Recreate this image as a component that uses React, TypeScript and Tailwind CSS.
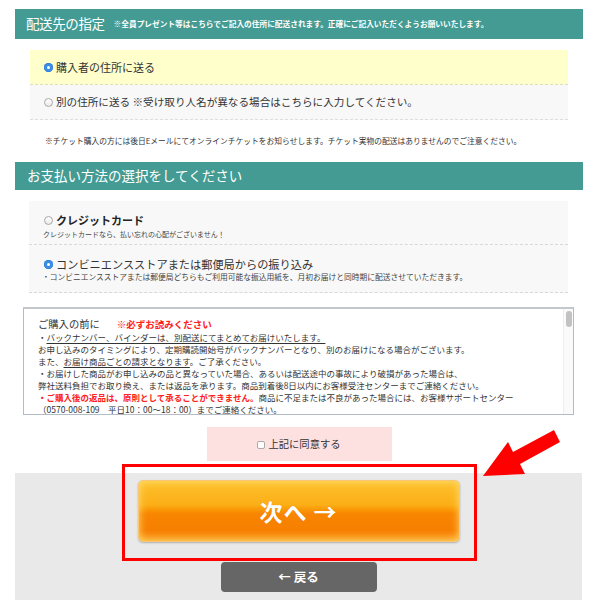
import React from "react";

function Radio({ checked }: { checked?: boolean }) {
  if (checked) {
    return (
      <span className="inline-flex w-[9px] h-[9px] shrink-0 rounded-full bg-[#3b8ee8] items-center justify-center shadow-[inset_0_0_0_0.5px_#2a73c5]">
        <span className="w-[3px] h-[3px] rounded-full bg-white" />
      </span>
    );
  }
  return (
    <span className="inline-block w-[9px] h-[9px] shrink-0 rounded-full bg-[linear-gradient(to_bottom,#ffffff,#eaeaea)] border border-[#a8a8a8]" />
  );
}

export default function App() {
  return (
    <div className="relative w-[596px] h-[600px] overflow-hidden bg-white text-[#333] font-['Noto_Sans_CJK_JP','Noto_Sans',sans-serif]">
      <div className="ml-[15px] w-[568px] pt-[9px]">
        {/* Header 1 */}
        <div className="h-[30px] bg-[#439b93] flex items-center pl-[11px] text-white">
          <span className="text-[13.5px] leading-none tracking-[-0.4px]">配送先の指定</span>
          <span className="ml-[9px] text-[7.7px] font-bold leading-none">
            ※全員プレゼント等はこちらでご記入の住所に配送されます。正確にご記入いただくようお願いいたします。
          </span>
        </div>

        <div className="mt-[11px] ml-[15px] w-[538px]">
          <div className="h-[35px] bg-[#ffffcc] border-b border-dashed border-[#dcdcc8] flex items-center pl-[14px]">
            <Radio checked />
            <span className="ml-[3px] text-[11px] leading-none">購入者の住所に送る</span>
          </div>
          <div className="h-[35px] bg-[#f8f8f8] border-b border-dashed border-[#dddddd] flex items-center pl-[14px]">
            <Radio />
            <span className="ml-[3px] text-[10.6px] leading-none">
              別の住所に送る ※受け取り人名が異なる場合はこちらに入力してください。
            </span>
          </div>
        </div>

        <p className="mt-[16px] pl-[30px] text-[7.75px] leading-[10px] whitespace-nowrap">
          ※チケット購入の方には後日Eメールにてオンラインチケットをお知らせします。チケット実物の配送はありませんのでご注意ください。
        </p>

        {/* Header 2 */}
        <div className="mt-[16px] h-[28px] bg-[#439b93] flex items-center pl-[12px] text-white">
          <span className="text-[13.5px] leading-none">お支払い方法の選択をしてください</span>
        </div>

        <div className="mt-[11px] ml-[14px] w-[539px] bg-[#f8f8f8]">
          <div className="h-[44px] border-b border-dashed border-[#d8d8d8] pl-[15px] pt-[12px]">
            <div className="flex items-center h-[14px]">
              <Radio />
              <span className="ml-[3px] text-[11px] font-bold leading-[14px] text-[#222]">クレジットカード</span>
            </div>
            <div className="mt-[2px] -ml-[1px] text-[7px] leading-[10px] text-[#444]">
              クレジットカードなら、払い忘れの心配がございません！
            </div>
          </div>
          <div className="h-[48px] border-b border-dashed border-[#d8d8d8] pl-[15px] pt-[12px]">
            <div className="flex items-center h-[14px]">
              <Radio checked />
              <span className="ml-[3px] text-[11.2px] leading-[14px]">コンビニエンスストアまたは郵便局からの振り込み</span>
            </div>
            <div className="mt-[1px] -ml-[2px] text-[7.75px] leading-[10px] text-[#444] whitespace-nowrap">
              ・コンビニエンスストアまたは郵便局どちらもご利用可能な振込用紙を、月初お届けと同時期に配送させていただきます。
            </div>
          </div>
        </div>

        {/* Terms box */}
        <div className="mt-[14px] ml-[8px] w-[551px] h-[108px] border border-[#b3bcc6] border-t-2 border-t-[#c4c8cc] flex overflow-hidden bg-white">
          <div className="flex-1 pl-[14px] pt-[6px] text-[8.5px] leading-[12px] text-[#333] whitespace-nowrap overflow-hidden">
            <div className="flex items-end h-[16px]">
              <span className="text-[10.3px] leading-[14px]">ご購入の前に</span>
              <span className="ml-[17px] text-[9.5px] leading-[14px] font-bold text-[#ff2020]">※必ずお読みください</span>
            </div>
            <div>
              ・<span className="underline underline-offset-[2px]">バックナンバー、バインダーは、別配送にてまとめてお届けいたします。</span>
            </div>
            <div>お申し込みのタイミングにより、定期購読開始号がバックナンバーとなり、別のお届けになる場合がございます。</div>
            <div>
              また、<span className="underline underline-offset-[2px]">お届け商品ごとの請求となります</span>。ご了承ください。
            </div>
            <div>・お届けした商品がお申し込みの品と異なっていた場合、あるいは配送途中の事故により破損があった場合は、</div>
            <div>弊社送料負担でお取り換え、または返品を承ります。商品到着後8日以内にお客様受注センターまでご連絡ください。</div>
            <div>
              <span className="font-bold text-[#ff2020]">・ご購入後の返品は、原則として承ることができません。</span>
              商品に不足または不良があった場合には、お客様サポートセンター
            </div>
            <div>（0570-008-109　平日10：00〜18：00）までご連絡ください。</div>
          </div>
          <div className="w-[10px] shrink-0 bg-[#fafafa] border-l border-[#eeeeee] pt-[2px] flex justify-center">
            <div className="w-[6px] h-[16px] rounded-[3px] bg-[#c2c2c2]" />
          </div>
        </div>

        {/* Agree */}
        <div className="mt-[12px] mx-auto w-[185px] h-[34px] bg-[#fde0e0] flex items-center justify-center">
          <span className="w-[8px] h-[8px] rounded-[2px] border border-[#aaaaaa] bg-white mt-[2px]" />
          <span className="ml-[3px] text-[10.3px] leading-none text-[#333]">上記に同意する</span>
        </div>

        {/* Bottom gray area */}
        <div className="mt-[12px] w-[567px] h-[140px] bg-[#e9e9e9] pt-[7px] flex flex-col items-center">
          <div className="w-[322px] h-[62px] rounded-[5px] border border-[#f7c776] bg-[linear-gradient(to_bottom,#fdc22e_0%,#fcae17_40%,#fa9a08_47%,#f88500_55%,#f77f00_82%,#fa9d22_100%)] shadow-[inset_0_0_9px_rgba(255,226,120,0.95),0_1px_2px_rgba(0,0,0,0.25)] flex items-center justify-center">
            <span className="text-white text-[23px] font-bold leading-none tracking-[1px] [text-shadow:0_0_1px_rgba(200,90,0,0.4)]">
              次へ →
            </span>
          </div>
          <div className="mt-[20px] w-[156px] h-[30px] rounded-[4px] bg-[#666666] flex items-center justify-center">
            <span className="text-white text-[12.5px] font-bold leading-none">← 戻る</span>
          </div>
        </div>
      </div>

      {/* Annotation overlays */}
      <div className="absolute left-[122px] top-[464px] w-[355px] h-[97px] border-[3px] border-[#ff0000] pointer-events-none" />
      <svg className="absolute left-0 top-0 pointer-events-none" width="596" height="600" viewBox="0 0 596 600">
        <polygon
          points="483,476 525,474 520,464 560,442 554,430 513,452 508,442"
          fill="#ff0000"
        />
      </svg>
    </div>
  );
}
